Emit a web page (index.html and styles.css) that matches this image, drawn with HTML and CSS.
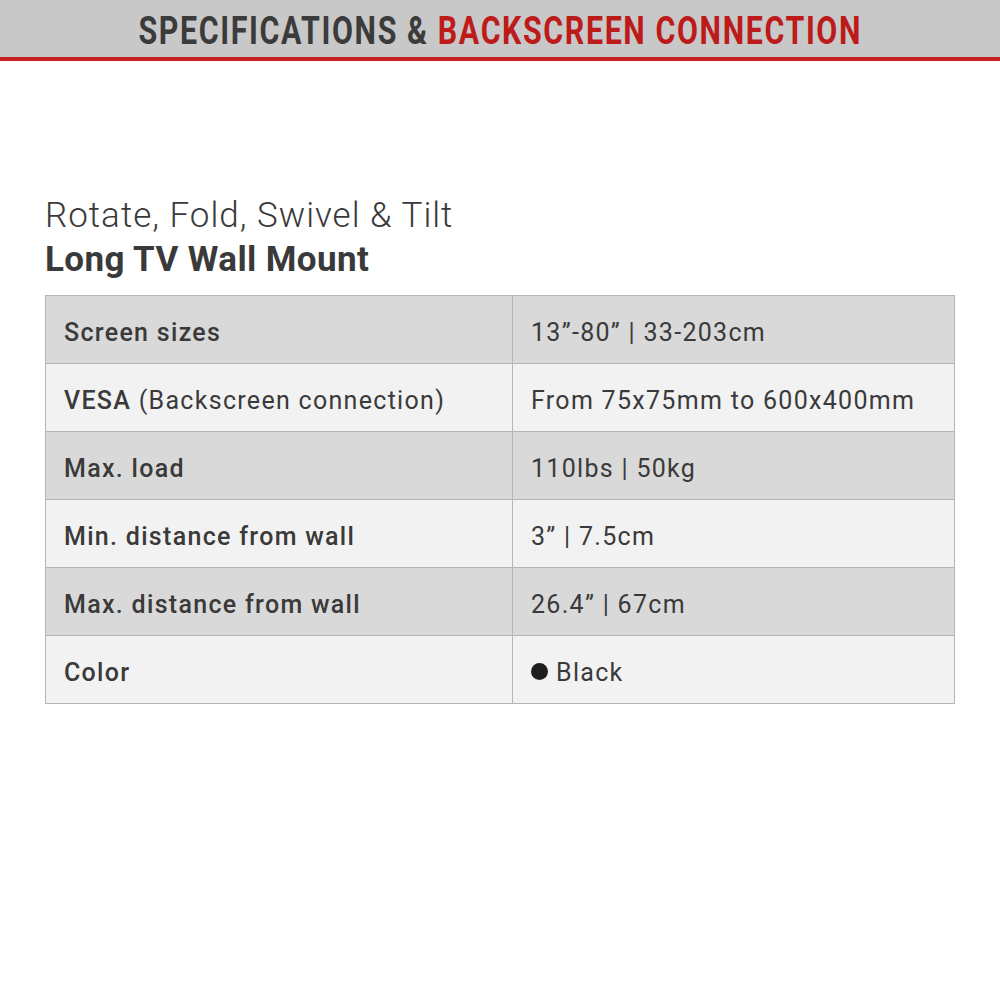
FILE: index.html
```html
<!DOCTYPE html>
<html>
<head>
<meta charset="utf-8">
<link rel="stylesheet" href="styles.css">
</head>
<body>
<header class="banner">
  <h1 class="banner-title">SPECIFICATIONS &amp; <span class="accent">BACKSCREEN CONNECTION</span></h1>
</header>
<main class="content">
  <h2 class="subtitle">Rotate, Fold, Swivel &amp; Tilt</h2>
  <h3 class="product">Long TV Wall Mount</h3>
  <table class="specs">
    <tr class="dark"><td class="label">Screen sizes</td><td class="value">13”-80” | 33-203cm</td></tr>
    <tr class="light"><td class="label">VESA <span class="normal">(Backscreen connection)</span></td><td class="value">From 75x75mm to 600x400mm</td></tr>
    <tr class="dark"><td class="label">Max. load</td><td class="value">110lbs | 50kg</td></tr>
    <tr class="light"><td class="label">Min. distance from wall</td><td class="value">3” | 7.5cm</td></tr>
    <tr class="dark"><td class="label">Max. distance from wall</td><td class="value">26.4” | 67cm</td></tr>
    <tr class="light"><td class="label">Color</td><td class="value"><span class="dot"></span>Black</td></tr>
  </table>
</main>
</body>
</html>
```
FILE: styles.css
```css
html, body { margin: 0; padding: 0; background: #fff; }
body { font-family: "Roboto", "DejaVu Sans", sans-serif; color: #3a3a3a; width: 1000px; height: 1000px; overflow: hidden; }
.banner { height: 57px; background: #c8c8c8; border-bottom: 4px solid #c6221f; display: flex; align-items: center; justify-content: center; }
.banner-title { margin: 4px 0 0 0; font-size: 38px; line-height: 44px; font-weight: 700; letter-spacing: 2px; color: #3b3b3b; white-space: nowrap; transform: scaleX(0.8); }
.accent { color: #bd1a1a; }
.content { padding: 133px 45px 0 45px; }
.subtitle { margin: 0; font-size: 35px; font-weight: 300; letter-spacing: 1px; line-height: 44px; color: #3a3a3a; }
.product { margin: 0; font-size: 35px; font-weight: 700; letter-spacing: 0.4px; line-height: 44px; color: #3a3a3a; }
.specs { margin-top: 13px; width: 910px; border-collapse: collapse; }
.specs td { height: 68px; box-sizing: border-box; border: 1px solid #b5b5b5; padding: 6px 0 0 18px; font-size: 25px; letter-spacing: 1.3px; vertical-align: middle; }
.specs .label { width: 467px; font-weight: 500; }
.specs .value { font-weight: 400; }
.normal { font-weight: 400; }
.dark td { background: #d9d9d9; }
.light td { background: #f2f2f2; }
.dot { display: inline-block; width: 17px; height: 17px; border-radius: 50%; background: #1e1e1e; margin-right: 8px; vertical-align: 1px; }
```
